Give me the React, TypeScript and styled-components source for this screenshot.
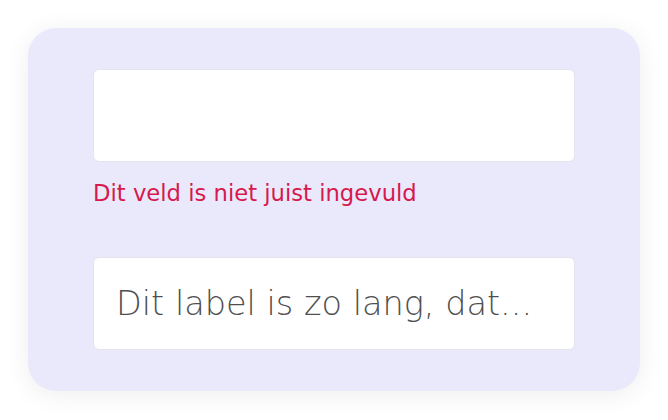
import styled, { createGlobalStyle } from "styled-components";

const GlobalStyle = createGlobalStyle`
  body {
    margin: 0;
    background: #ffffff;
    font-family: "DejaVu Sans", sans-serif;
  }
`;

interface FieldProps {
  placeholder?: string;
  errorMessage?: string;
}

const Field = (props: FieldProps) => {
  return (
    <FieldGroup>
      <InputField placeholder={props.placeholder} />
      {props.errorMessage && <ErrorMessage>{props.errorMessage}</ErrorMessage>}
    </FieldGroup>
  );
};

const App = () => {
  return (
    <Page>
      <GlobalStyle />
      <Card>
        <Field errorMessage="Dit veld is niet juist ingevuld" />
        <Field placeholder="Dit label is zo lang, dat..." />
      </Card>
    </Page>
  );
};

const Page = styled.div`
  padding: 28px;
`;

const Card = styled.div`
  width: 612px;
  box-sizing: border-box;
  padding: 41px 65px;
  display: flex;
  flex-direction: column;
  gap: 48px;
  background: #eae9fb;
  border-radius: 28px;
  box-shadow: 0 4px 26px rgba(0, 0, 0, 0.07);
`;

const FieldGroup = styled.div`
  display: flex;
  flex-direction: column;
  gap: 16px;
`;

const InputField = styled.input`
  height: 93px;
  box-sizing: border-box;
  padding: 0 22px;
  border: 1px solid #e4e4ee;
  border-radius: 6px;
  background: #ffffff;
  font-family: "DejaVu Sans", sans-serif;
  font-weight: 200;
  font-size: 33.5px;
  color: #4f4f4f;
  outline: none;

  &::placeholder {
    color: #4f4f4f;
    opacity: 1;
  }
`;

const ErrorMessage = styled.p`
  margin: 0;
  color: #d6194e;
  font-size: 22.7px;
  font-weight: 400;
  line-height: 31px;
`;

export default App;
